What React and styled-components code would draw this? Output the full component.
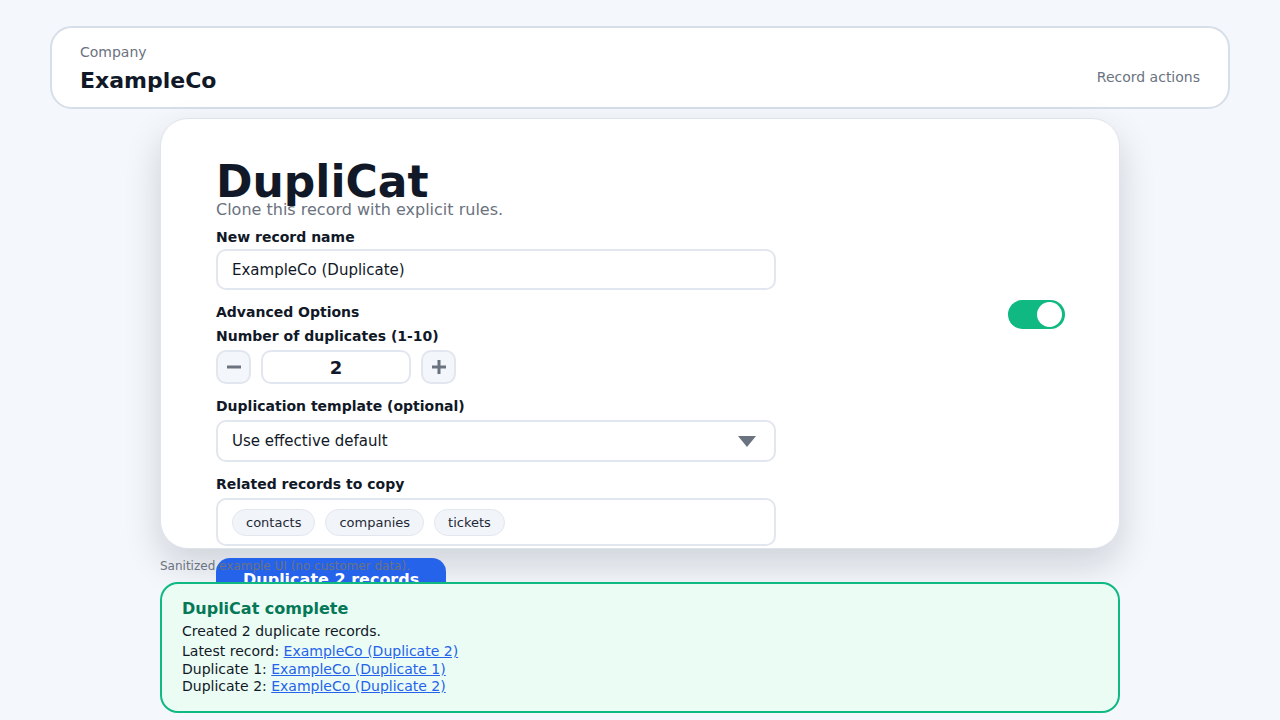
import styled, { createGlobalStyle } from "styled-components"

const GlobalStyle = createGlobalStyle`
    body {
        margin: 0;
        background-color: #f4f7fb;
        font-family: "DejaVu Sans", "Liberation Sans", sans-serif;
        color: #111827;
    }
`

const Pagina = styled.div`
    padding: 26px 50px 0;
`

const Cabecalho = styled.header`
    display: flex;
    justify-content: space-between;
    align-items: flex-end;
    background-color: #fff;
    border: 2px solid #d6dee9;
    border-radius: 22px;
    padding: 14px 28px 12px;
`

const Empresa = styled.div`
    display: flex;
    flex-direction: column;
    gap: 5px;
    span {
        font-size: 14px;
        line-height: 20px;
        color: #6b7280;
    }
    h2 {
        margin: 0;
        font-size: 22px;
        line-height: 28px;
        font-weight: 700;
        color: #111827;
    }
`

const BotaoAcoes = styled.button`
    background: transparent;
    border: 0;
    padding: 8px 0;
    font-family: inherit;
    font-size: 14px;
    line-height: 20px;
    color: #6b7280;
`

const Cartao = styled.section`
    box-sizing: border-box;
    width: 960px;
    height: 431px;
    margin: 9px auto 0;
    padding: 41px 55px 0;
    background-color: #fff;
    border: 1px solid #dfe4ec;
    border-radius: 28px;
    box-shadow: 0 16px 36px rgba(15, 23, 42, 0.16);
`

const Titulo = styled.h1`
    margin: 0;
    font-size: 44px;
    line-height: 44px;
    font-weight: 700;
    color: #111827;
`

const Subtitulo = styled.p`
    margin: -4px 0 0;
    font-size: 16px;
    line-height: 20px;
    color: #6b7280;
`

const Formulario = styled.div`
    display: flex;
    flex-direction: column;
    gap: 14px;
    margin-top: 9px;
`

const Campo = styled.div`
    display: flex;
    flex-direction: column;
    gap: ${props => props.$gap || 6}px;
    width: 560px;
`

const Rotulo = styled.label`
    font-size: 14px;
    line-height: 16px;
    font-weight: 700;
    color: #111827;
`

const Entrada = styled.div`
    box-sizing: border-box;
    height: ${props => props.$altura || 42}px;
    display: flex;
    align-items: center;
    justify-content: space-between;
    padding: 0 18px 0 14px;
    border: 2px solid #e2e6ef;
    border-radius: 10px;
    background: #fff;
    font-size: 15px;
    color: #111827;
`

const Seta = styled.span`
    width: 0;
    height: 0;
    border-left: 9px solid transparent;
    border-right: 9px solid transparent;
    border-top: 11px solid #6b7280;
`

const Avancado = styled.div`
    display: flex;
    flex-direction: column;
    gap: 8px;
`

const LinhaAvancado = styled.div`
    display: flex;
    justify-content: space-between;
    align-items: center;
    height: 16px;
`

const Interruptor = styled.div`
    box-sizing: border-box;
    width: 57px;
    height: 29px;
    margin: 4px -1px 0 0;
    padding: 2px 3px;
    display: flex;
    justify-content: flex-end;
    border-radius: 15px;
    background-color: #10b981;
    span {
        width: 25px;
        height: 25px;
        border-radius: 50%;
        background: #fff;
    }
`

const Contador = styled.div`
    display: flex;
    gap: 10px;
`

const BotaoPasso = styled.button`
    box-sizing: border-box;
    width: 35px;
    height: 34px;
    padding: 0;
    display: flex;
    align-items: center;
    justify-content: center;
    border: 2px solid #e2e6ef;
    border-radius: 10px;
    background: #f3f6fa;
`

const Numero = styled.div`
    box-sizing: border-box;
    width: 150px;
    height: 34px;
    display: flex;
    align-items: center;
    justify-content: center;
    border: 2px solid #e2e6ef;
    border-radius: 10px;
    font-size: 18px;
    font-weight: 700;
    color: #111827;
`

const CaixaEtiquetas = styled.div`
    box-sizing: border-box;
    height: 48px;
    display: flex;
    align-items: center;
    gap: 10px;
    padding: 0 14px;
    border: 2px solid #e2e6ef;
    border-radius: 10px;
`

const Etiqueta = styled.span`
    padding: 4px 13px;
    font-size: 13px;
    line-height: 17px;
    color: #1f2937;
    background: #f1f4f9;
    border: 1px solid #e2e6ef;
    border-radius: 999px;
`

const BotaoPrincipal = styled.button`
    align-self: flex-start;
    margin-top: -2px;
    padding: 12px 27px;
    border: 0;
    border-radius: 14px;
    background-color: #2563eb;
    color: #fff;
    font-family: inherit;
    font-size: 16px;
    line-height: 20px;
    font-weight: 700;
`

const Nota = styled.p`
    width: 960px;
    margin: 10px auto 0;
    font-size: 12px;
    line-height: 14px;
    color: #6b7280;
`

const Sucesso = styled.section`
    position: relative;
    box-sizing: border-box;
    width: 960px;
    margin: 9px auto 0;
    padding: 15px 20px 15px;
    background-color: #ebfcf4;
    border: 2px solid #10b981;
    border-radius: 18px;
    font-size: 14px;
    color: #111827;
    h3 {
        margin: 0 0 3px;
        font-size: 16px;
        line-height: 20px;
        color: #047857;
    }
    p {
        margin: 0 0 3px;
        line-height: 18px;
    }
    ul {
        list-style: none;
        margin: 0;
        padding: 0;
        line-height: 17.5px;
    }
    a {
        color: #2563eb;
    }
`

const Icone = ({ mais }) => (
    <svg width="16" height="16" viewBox="0 0 16 16">
        <path d={mais ? "M1 8h14M8 1v14" : "M1 8h14"} stroke="#6b7280" strokeWidth="3" />
    </svg>
)

const App = () => {
    const relacionados = ["contacts", "companies", "tickets"]

    return (<>
        <GlobalStyle />
        <Pagina>
            <Cabecalho>
                <Empresa>
                    <span>Company</span>
                    <h2>ExampleCo</h2>
                </Empresa>
                <BotaoAcoes>Record actions</BotaoAcoes>
            </Cabecalho>

            <Cartao>
                <Titulo>DupliCat</Titulo>
                <Subtitulo>Clone this record with explicit rules.</Subtitulo>
                <Formulario>
                    <Campo $gap={4}>
                        <Rotulo>New record name</Rotulo>
                        <Entrada $altura={41}>ExampleCo (Duplicate)</Entrada>
                    </Campo>
                    <Avancado>
                        <LinhaAvancado>
                            <Rotulo>Advanced Options</Rotulo>
                            <Interruptor><span /></Interruptor>
                        </LinhaAvancado>
                        <Campo>
                            <Rotulo>Number of duplicates (1-10)</Rotulo>
                            <Contador>
                                <BotaoPasso><Icone /></BotaoPasso>
                                <Numero>2</Numero>
                                <BotaoPasso><Icone mais /></BotaoPasso>
                            </Contador>
                        </Campo>
                    </Avancado>
                    <Campo>
                        <Rotulo>Duplication template (optional)</Rotulo>
                        <Entrada>Use effective default<Seta /></Entrada>
                    </Campo>
                    <Campo $gap={6}>
                        <Rotulo>Related records to copy</Rotulo>
                        <CaixaEtiquetas>
                            {relacionados.map(item => <Etiqueta key={item}>{item}</Etiqueta>)}
                        </CaixaEtiquetas>
                    </Campo>
                    <BotaoPrincipal>Duplicate 2 records</BotaoPrincipal>
                </Formulario>
            </Cartao>

            <Nota>Sanitized example UI (no customer data).</Nota>

            <Sucesso>
                <h3>DupliCat complete</h3>
                <p>Created 2 duplicate records.</p>
                <ul>
                    <li>Latest record: <a href="#">ExampleCo (Duplicate 2)</a></li>
                    <li>Duplicate 1: <a href="#">ExampleCo (Duplicate 1)</a></li>
                    <li>Duplicate 2: <a href="#">ExampleCo (Duplicate 2)</a></li>
                </ul>
            </Sucesso>
        </Pagina>
    </>)
}

export default App
